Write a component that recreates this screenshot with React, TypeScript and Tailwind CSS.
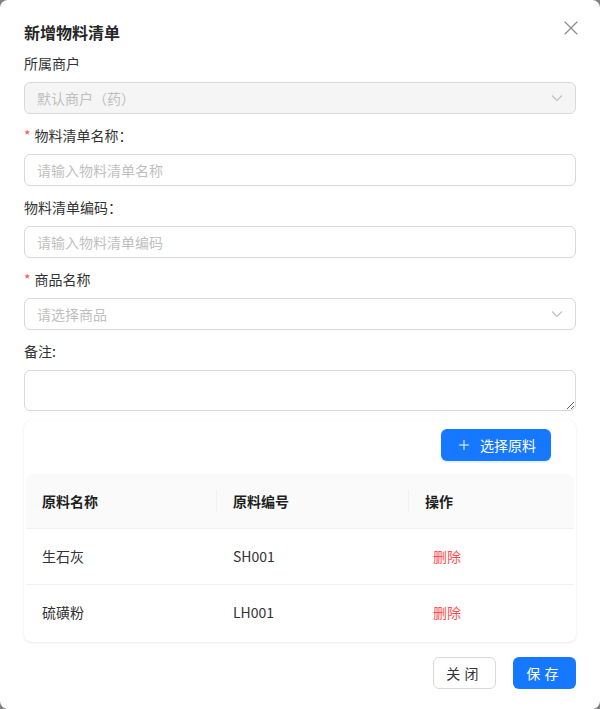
import { Plus, X } from 'lucide-react'

const font = { fontFamily: '"Noto Sans CJK SC", "Noto Sans", sans-serif' }

function Chevron() {
  return (
    <svg width="12" height="12" viewBox="0 0 12 12" fill="none" stroke="#bfbfbf" strokeWidth="1.1" aria-hidden="true">
      <polyline points="1,3.5 6,8.5 11,3.5" />
    </svg>
  )
}

function Label({ text, required }: { text: string; required?: boolean }) {
  return (
    <div className="mb-2 flex h-[22px] items-center text-[14px] leading-[22px] text-[#333]">
      {required && <span className="mr-1 text-[14px] text-[#ff4d4f]">*</span>}
      {text}
    </div>
  )
}

const rows = [
  { name: '生石灰', code: 'SH001' },
  { name: '硫磺粉', code: 'LH001' },
]

export default function App() {
  return (
    <div className="min-h-[709px] w-[600px] bg-[#808080]" style={font}>
      <div className="relative h-[709px] w-[600px] rounded-lg bg-white px-6 pt-5">
        <button type="button" className="absolute right-[17px] top-[16px] text-[#8c8c8c]" aria-label="关闭">
          <X size={24} strokeWidth={1.15} />
        </button>
        <h2 className="mb-2 h-6 text-[16px] font-bold leading-6 text-[#262626]">新增物料清单</h2>

        <div className="mb-[10px]">
          <Label text="所属商户" />
          <div className="flex h-8 items-center justify-between rounded-md border border-[#d9d9d9] bg-[#f5f5f5] px-3 text-[14px] text-[#bfbfbf]">
            <span>默认商户（药）</span>
            <Chevron />
          </div>
        </div>

        <div className="mb-[10px]">
          <Label text="物料清单名称：" required />
          <div className="flex h-8 items-center rounded-md border border-[#d9d9d9] px-3 text-[14px] text-[#bfbfbf]">请输入物料清单名称</div>
        </div>

        <div className="mb-[10px]">
          <Label text="物料清单编码：" />
          <div className="flex h-8 items-center rounded-md border border-[#d9d9d9] px-3 text-[14px] text-[#bfbfbf]">请输入物料清单编码</div>
        </div>

        <div className="mb-[10px]">
          <Label text="商品名称" required />
          <div className="flex h-8 items-center justify-between rounded-md border border-[#d9d9d9] px-3 text-[14px] text-[#bfbfbf]">
            <span>请选择商品</span>
            <Chevron />
          </div>
        </div>

        <div className="mb-[9px]">
          <Label text="备注:" />
          <textarea className="block h-[41px] w-full rounded-md border border-[#d9d9d9] px-3 py-1 text-[14px] outline-none" />
        </div>

        <div className="rounded-lg bg-white px-[2px] pb-[2px] pt-[9px] shadow-[0_1px_3px_rgba(0,0,0,0.08),0_0_1px_rgba(0,0,0,0.06)]">
          <div className="flex justify-end pr-[23px]">
            <button type="button" className="flex h-8 items-center gap-2 rounded-md bg-[#1677ff] px-[15px] text-[14px] text-white shadow-[0_2px_0_rgba(5,145,255,0.1)]">
              <Plus size={16} strokeWidth={1.5} />
              选择原料
            </button>
          </div>
          <table className="mt-[13px] w-full border-collapse text-[14px]">
            <thead>
              <tr className="bg-[#fafafa] text-[#1f1f1f]">
                <th className="relative h-[54px] w-[191px] rounded-tl-lg border-b border-[#f0f0f0] px-4 text-left font-bold leading-[22px]">
                  原料名称
                  <span className="absolute right-0 top-1/2 h-[22px] w-px -translate-y-1/2 bg-[#f0f0f0]" />
                </th>
                <th className="relative h-[54px] w-[192px] border-b border-[#f0f0f0] px-4 text-left font-bold leading-[22px]">
                  原料编号
                  <span className="absolute right-0 top-1/2 h-[22px] w-px -translate-y-1/2 bg-[#f0f0f0]" />
                </th>
                <th className="h-[54px] rounded-tr-lg border-b border-[#f0f0f0] px-4 text-left font-bold leading-[22px]">操作</th>
              </tr>
            </thead>
            <tbody>
              {rows.map((r, i) => (
                <tr key={r.code} className={i === rows.length - 1 ? '' : 'border-b border-[#f0f0f0]'}>
                  <td className="h-[56px] px-4 leading-[22px] text-[#333]">{r.name}</td>
                  <td className="h-[56px] px-4 leading-[22px] text-[#333]">{r.code}</td>
                  <td className="h-[56px] pl-6 leading-[22px] text-[#ff4d4f]">删除</td>
                </tr>
              ))}
            </tbody>
          </table>
        </div>

        <div className="mt-[15px] flex justify-end gap-[17px]">
          <button type="button" className="h-8 w-[63px] rounded-md border border-[#d9d9d9] bg-white text-[14px] tracking-[0.3em] text-[#333]">
            关闭
          </button>
          <button type="button" className="h-8 w-[63px] rounded-md bg-[#1677ff] text-[14px] tracking-[0.3em] text-white">
            保存
          </button>
        </div>
      </div>
    </div>
  )
}
